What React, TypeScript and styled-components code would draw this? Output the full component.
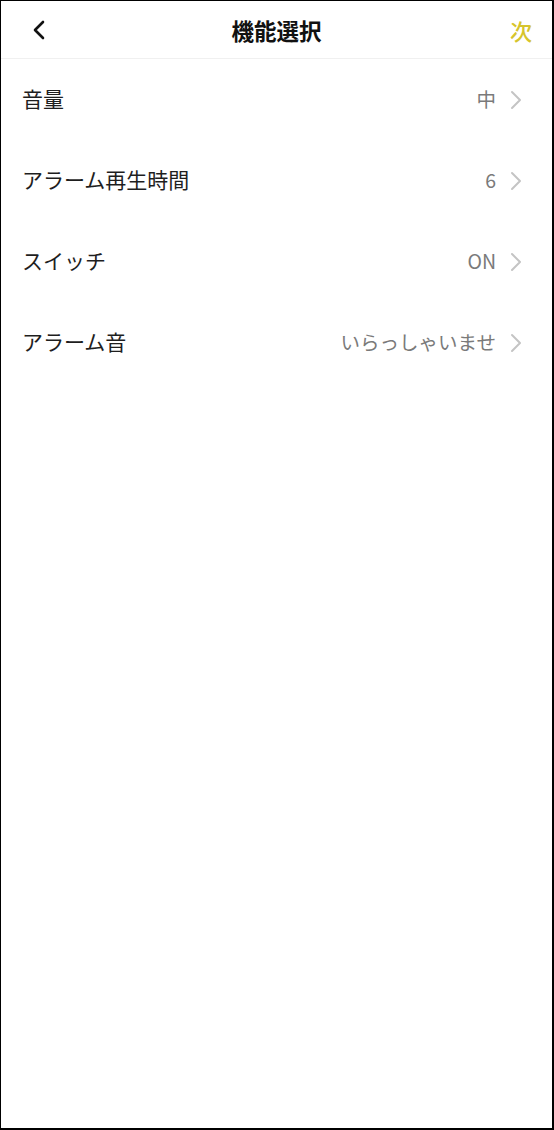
import styled, { createGlobalStyle } from 'styled-components'

const GlobalStyle = createGlobalStyle`
    html, body {
        margin: 0;
        padding: 0;
        background: #fff;
    }
    body {
        font-family: "Noto Sans CJK JP", "Noto Sans", sans-serif;
    }
`

const Screen = styled.div`
    box-sizing: border-box;
    width: 554px;
    height: 1130px;
    border-style: solid;
    border-color: #000;
    border-width: 1px 2px 2px 1px;
    background: #fff;
    display: flex;
    flex-direction: column;
`

const Header = styled.header`
    height: 57px;
    display: flex;
    align-items: center;
    justify-content: space-between;
    padding: 0 20px 0 28px;
    border-bottom: 1px solid #f0f0f0;
    position: relative;
`

const BackButton = styled.button`
    border: none;
    background: none;
    padding: 0;
    width: 20px;
    height: 24px;
    display: flex;
    align-items: center;
    justify-content: center;
    cursor: pointer;
`

const Title = styled.h1`
    position: absolute;
    left: 0;
    right: 0;
    margin: 0;
    text-align: center;
    font-size: 22.5px;
    font-weight: 700;
    color: #111;
    pointer-events: none;
`

const NextButton = styled.button`
    border: none;
    background: none;
    padding: 0;
    font-family: inherit;
    font-size: 22px;
    font-weight: 500;
    color: #d6c42c;
    cursor: pointer;
`

const List = styled.ul`
    list-style: none;
    margin: 0;
    padding: 0;
`

const Row = styled.li`
    height: 81px;
    display: flex;
    align-items: center;
    padding: 0 30px 0 21px;
`

const Label = styled.span`
    flex: 1;
    font-size: 21px;
    color: #1e1e1e;
    line-height: 1;
    margin-top: -2px;
`

const Value = styled.span`
    font-size: 19.5px;
    color: #7a7a7a;
    margin-right: 14px;
    line-height: 1;
    margin-top: -2px;
`

const Chevron = ({ color = '#c4c4c4' }: { color?: string }) => (
    <svg width="12" height="20" viewBox="0 0 12 20" fill="none">
        <path d="M2 2l8 8-8 8" stroke={color} strokeWidth="2" strokeLinecap="round" strokeLinejoin="round" />
    </svg>
)

const items = [
    { label: '音量', value: '中' },
    { label: 'アラーム再生時間', value: '6' },
    { label: 'スイッチ', value: 'ON' },
    { label: 'アラーム音', value: 'いらっしゃいませ' },
]

function App() {
    return (
        <>
            <GlobalStyle />
            <Screen>
                <Header>
                    <BackButton aria-label="back">
                        <svg width="14" height="20" viewBox="0 0 14 20" fill="none">
                            <path d="M11 2L3 10l8 8" stroke="#111" strokeWidth="2.6" strokeLinecap="round" strokeLinejoin="round" />
                        </svg>
                    </BackButton>
                    <Title>機能選択</Title>
                    <NextButton>次</NextButton>
                </Header>
                <List>
                    {items.map((item) => (
                        <Row key={item.label}>
                            <Label>{item.label}</Label>
                            <Value>{item.value}</Value>
                            <Chevron />
                        </Row>
                    ))}
                </List>
            </Screen>
        </>
    )
}

export default App
